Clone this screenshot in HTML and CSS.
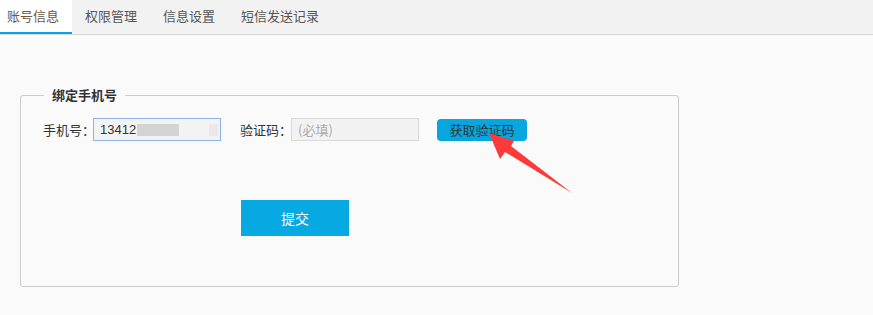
FILE: index.html
```html
<!DOCTYPE html>
<html lang="zh-CN">
<head>
<meta charset="utf-8">
<title>绑定手机号</title>
<link rel="stylesheet" href="styles.css">
</head>
<body>
<div class="tabs">
  <div class="tab active">账号信息</div>
  <div class="tab">权限管理</div>
  <div class="tab">信息设置</div>
  <div class="tab">短信发送记录</div>
</div>
<div class="content">
  <fieldset class="box">
    <legend class="legend">绑定手机号</legend>
    <div class="row">
      <span class="label">手机号：</span>
      <div class="input focus"><span class="num">13412</span><span class="blur"></span><span class="blur2"></span></div>
      <span class="label label2">验证码：</span>
      <div class="input"><span class="ph">(必填)</span></div>
      <button class="code-btn">获取验证码</button>
    </div>
    <button class="submit">提交</button>
  </fieldset>
</div>
<svg class="arrow" width="873" height="315" viewBox="0 0 873 315">
  <polygon points="489,133 514,141 511,146 572,193 505,152 500,159" fill="#fd3a3a"/>
</svg>
</body>
</html>
```
FILE: styles.css
```css
html, body {
  margin: 0;
  padding: 0;
  background: #fafafa;
  font-family: "Noto Sans CJK SC", "Liberation Sans", sans-serif;
  color: #333;
  font-size: 13px;
  width: 873px;
  height: 315px;
  overflow: hidden;
  position: relative;
}
.tabs {
  display: flex;
  height: 34px;
  background: #f2f2f2;
  border-bottom: 1px solid #d6d6d6;
  padding-left: 0;
}
.tab {
  padding: 0 13px;
  line-height: 32px;
  height: 34px;
  box-sizing: border-box;
  color: #555;
  font-size: 13px;
}
.tab.active {
  margin-left: -6px;
  background: #fff;
  border-bottom: 2px solid #0aa2df;
  color: #6b5a3f;
}
.content {
  padding: 50px 0 0 20px;
}
.box {
  margin: 0;
  width: 659px;
  box-sizing: border-box;
  border: 1px solid #cbcbcb;
  border-radius: 3px;
  padding: 13px 0 50px 22px;
  min-inline-size: 0;
}
.legend {
  margin-left: 1px;
  padding: 0 8px;
  font-weight: bold;
  line-height: 20px;
  font-size: 13px;
  color: #333;
}
.row {
  display: flex;
  align-items: center;
  height: 23px;
}
.label {
  width: 50px;
  white-space: nowrap;
  font-size: 13px;
}
.label2 {
  margin-left: 19px;
  width: 51px;
}
.input {
  width: 128px;
  height: 23px;
  box-sizing: border-box;
  border: 1px solid #d9d9d9;
  background: #f2f2f2;
  display: flex;
  align-items: center;
  padding-left: 6px;
  position: relative;
}
.input.focus {
  border-color: #8fb2ec;
  background: #f3f3f3;
}
.num {
  font-family: "Liberation Sans", "Noto Sans CJK SC", sans-serif;
  font-size: 13px;
  color: #333;
}
.blur {
  display: inline-block;
  width: 42px;
  height: 12px;
  background: #d4d4d4;
  margin-left: 1px;
}
.blur2 {
  display: inline-block;
  width: 9px;
  height: 12px;
  background: #e9e9e9;
  margin-left: 30px;
}
.ph {
  color: #a9a9a9;
  font-size: 13px;
}
.code-btn {
  margin-left: 18px;
  width: 90px;
  height: 22px;
  border: none;
  border-radius: 4px;
  background: #08a6df;
  color: #333;
  font-family: "Noto Sans CJK SC", sans-serif;
  font-size: 13px;
  padding: 0;
  line-height: 22px;
}
.submit {
  display: block;
  margin: 59px 0 0 198px;
  width: 108px;
  height: 36px;
  border: none;
  background: #06a9e1;
  color: #fff;
  font-family: "Noto Sans CJK SC", sans-serif;
  font-size: 14px;
  padding: 0;
}
.arrow {
  position: absolute;
  left: 0;
  top: 0;
  pointer-events: none;
}
```
